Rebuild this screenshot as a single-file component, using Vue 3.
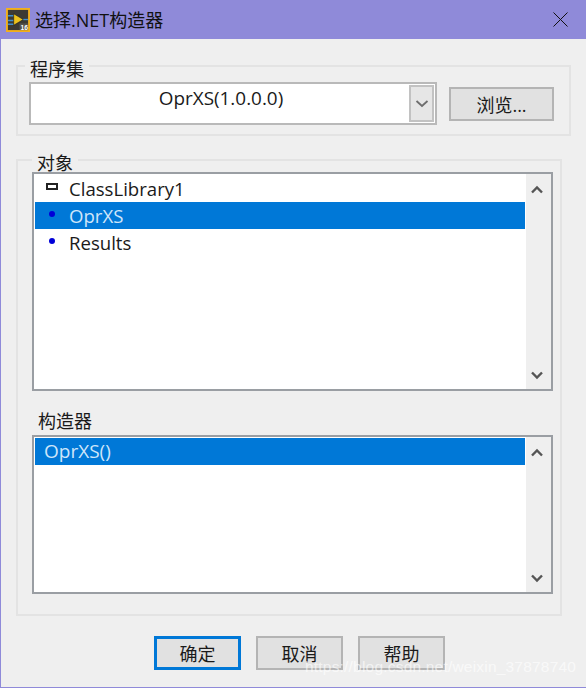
<script setup>
const classes = [
  { name: 'ClassLibrary1', kind: 'ns' },
  { name: 'OprXS', kind: 'dot', selected: true },
  { name: 'Results', kind: 'dot' },
]
const buttons = [
  { label: '确定', primary: true },
  { label: '取消' },
  { label: '帮助' },
]
</script>

<template>
  <div class="window">
    <div class="titlebar">
      <svg class="appicon" width="24" height="24" viewBox="0 0 25 25">
        <rect x="1" y="1" width="23" height="23" fill="#3c3a34" stroke="#f2b01e" stroke-width="2" />
        <path d="M2 8h6M2 13h6M2 17h6" stroke="#3f8fd0" stroke-width="1.6" />
        <path d="M8 6l10 6-10 6z" fill="#ecc21c" stroke="#1b1b1b" stroke-width=".6" />
        <path d="M18 12h5" stroke="#3f8fd0" stroke-width="1.4" />
        <rect x="14" y="16" width="9" height="7" fill="#55524a" />
        <text x="15" y="23" class="icontext">16</text>
      </svg>
      <span class="title">选择.NET构造器</span>
      <svg class="close" width="15" height="15" viewBox="0 0 15 15">
        <path d="M.5.5l14 14M14.5.5l-14 14" stroke="#111" stroke-width="1" fill="none" />
      </svg>
    </div>

    <div class="body">
      <div class="group group-asm">
        <span class="legend legend-asm">程序集</span>
        <div class="combo">
          <div class="combo-value">OprXS(1.0.0.0)</div>
          <div class="combo-arrow">
            <svg width="14" height="8" viewBox="0 0 14 8">
              <path d="M1.5 1l5.5 5 5.5-5" stroke="#6d6d6d" stroke-width="1.8" fill="none" />
            </svg>
          </div>
        </div>
        <div class="btn browse">浏览...</div>
      </div>

      <div class="group group-obj">
        <span class="legend legend-obj">对象</span>
        <div class="listbox list-classes">
          <div class="rows">
            <div v-for="c in classes" :key="c.name" class="row" :class="{ selected: c.selected }">
              <span class="glyph">
                <span :class="c.kind"></span>
              </span>
              <span>{{ c.name }}</span>
            </div>
          </div>
          <div class="scroll">
            <svg width="12" height="9" viewBox="0 0 12 9"><path d="M1 7.5l5-5 5 5" stroke="#555" stroke-width="2.4" fill="none" /></svg>
            <svg width="12" height="9" viewBox="0 0 12 9"><path d="M1 1.5l5 5 5-5" stroke="#555" stroke-width="2.4" fill="none" /></svg>
          </div>
        </div>

        <div class="ctor-label">构造器</div>
        <div class="listbox list-ctors">
          <div class="rows">
            <div class="row selected ctor">OprXS()</div>
          </div>
          <div class="scroll">
            <svg width="12" height="9" viewBox="0 0 12 9"><path d="M1 7.5l5-5 5 5" stroke="#555" stroke-width="2.4" fill="none" /></svg>
            <svg width="12" height="9" viewBox="0 0 12 9"><path d="M1 1.5l5 5 5-5" stroke="#555" stroke-width="2.4" fill="none" /></svg>
          </div>
        </div>
      </div>

      <div class="actions">
        <div v-for="b in buttons" :key="b.label" class="btn action" :class="{ primary: b.primary }">{{ b.label }}</div>
      </div>
    </div>

    <div class="watermark">https://blog.csdn.net/weixin_37878740</div>
  </div>
</template>

<style>
html, body { margin: 0; padding: 0; background: #efefef; }
</style>

<style scoped>
.window {
  position: relative;
  width: 586px;
  height: 688px;
  box-sizing: border-box;
  background: #efefef;
  border-left: 1px solid #8f8ad9;
  border-bottom: 1px solid #8f8ad9;
  overflow: hidden;
  font-family: "Segoe UI", "Open Sans", "Noto Sans", "Noto Sans CJK SC", sans-serif;
  font-size: 18px;
  color: #1a1a1a;
}

.titlebar {
  height: 39px;
  margin-left: -1px;
  background: #8f8ad9;
  display: flex;
  align-items: center;
  padding: 0 18px 0 6px;
}
.appicon { flex: none; }
.icontext { font-size: 7px; font-weight: 700; fill: #fff; font-family: "Liberation Sans", sans-serif; }
.title {
  flex: 1;
  margin: -2px 0 0 5px;
  font-size: 18px;
  color: #111;
}
.close { flex: none; }

.body {
  padding: 26px 0 0 15px;
}

.group {
  position: relative;
  box-sizing: border-box;
  border: 2px solid #e3e3e3;
}
.legend {
  position: absolute;
  background: #efefef;
  line-height: 18px;
  padding: 0 5px;
}
.group-asm {
  width: 555px;
  height: 71px;
  display: flex;
  align-items: flex-start;
  padding: 15px 0 0 11px;
}
.legend-asm { left: 7px; top: -7px; }
.combo {
  width: 408px;
  height: 43px;
  box-sizing: border-box;
  border: 2px solid #b9b9b9;
  background: #fff;
  display: flex;
  flex: none;
}
.combo-value {
  flex: 1;
  text-align: center;
  font-size: 18.9px;
  line-height: 28px;
  padding-left: 2px;
}
.combo-arrow {
  width: 25px;
  margin: 1px 1px 1px 0;
  box-sizing: border-box;
  border: 2px solid #c2c2c2;
  background: #e6e6e6;
  display: flex;
  align-items: center;
  justify-content: center;
}
.btn {
  box-sizing: border-box;
  background: #e1e1e1;
  border: 2px solid #b4b4b4;
  display: flex;
  align-items: center;
  justify-content: center;
}
.browse {
  width: 105px;
  height: 34px;
  margin: 5px 0 0 12px;
}

.group-obj {
  width: 546px;
  height: 457px;
  margin-top: 23px;
  padding: 11px 0 0 14px;
}
.legend-obj { left: 14px; top: -7px; }
.listbox {
  width: 521px;
  box-sizing: border-box;
  border: 2px solid #9a9ea3;
  background: #fff;
  display: flex;
  padding: 1px 0 0 1px;
}
.list-classes { height: 219px; }
.list-ctors { height: 159px; }
.rows { width: 490px; flex: none; }
.row {
  height: 27px;
  display: flex;
  align-items: center;
  font-size: 18.6px;
  line-height: 27px;
}
.row.selected {
  background: #0078d7;
  color: #cfe6fa;
}
.glyph {
  width: 34px;
  flex: none;
  display: flex;
  justify-content: center;
  padding-right: 1px;
  box-sizing: border-box;
  margin-top: -4px;
}
.ns {
  width: 12px;
  height: 7px;
  box-sizing: border-box;
  border: 2px solid #222;
  background: #fff;
}
.dot {
  width: 6px;
  height: 6px;
  border-radius: 50%;
  background: #0000d8;
}
.ctor { padding-left: 9px; font-size: 19px; }
.scroll {
  width: 25px;
  margin: -1px 0 0 1px;
  background: #efefef;
  display: flex;
  flex-direction: column;
  justify-content: space-between;
  align-items: center;
  padding: 11px 3px 9px 0;
  box-sizing: border-box;
}

.ctor-label {
  height: 44px;
  line-height: 22px;
  padding: 19px 0 0 6px;
  box-sizing: border-box;
}

.actions {
  display: flex;
  gap: 15px;
  margin: 20px 0 0 138px;
}
.action {
  width: 87px;
  height: 34px;
}
.primary {
  border: 3px solid #0078d7;
}

.watermark {
  position: absolute;
  left: 304px;
  top: 658px;
  font-family: "Liberation Sans", sans-serif;
  font-size: 15.5px;
  color: rgba(255, 255, 255, 0.62);
  white-space: nowrap;
  letter-spacing: .2px;
}
</style>
